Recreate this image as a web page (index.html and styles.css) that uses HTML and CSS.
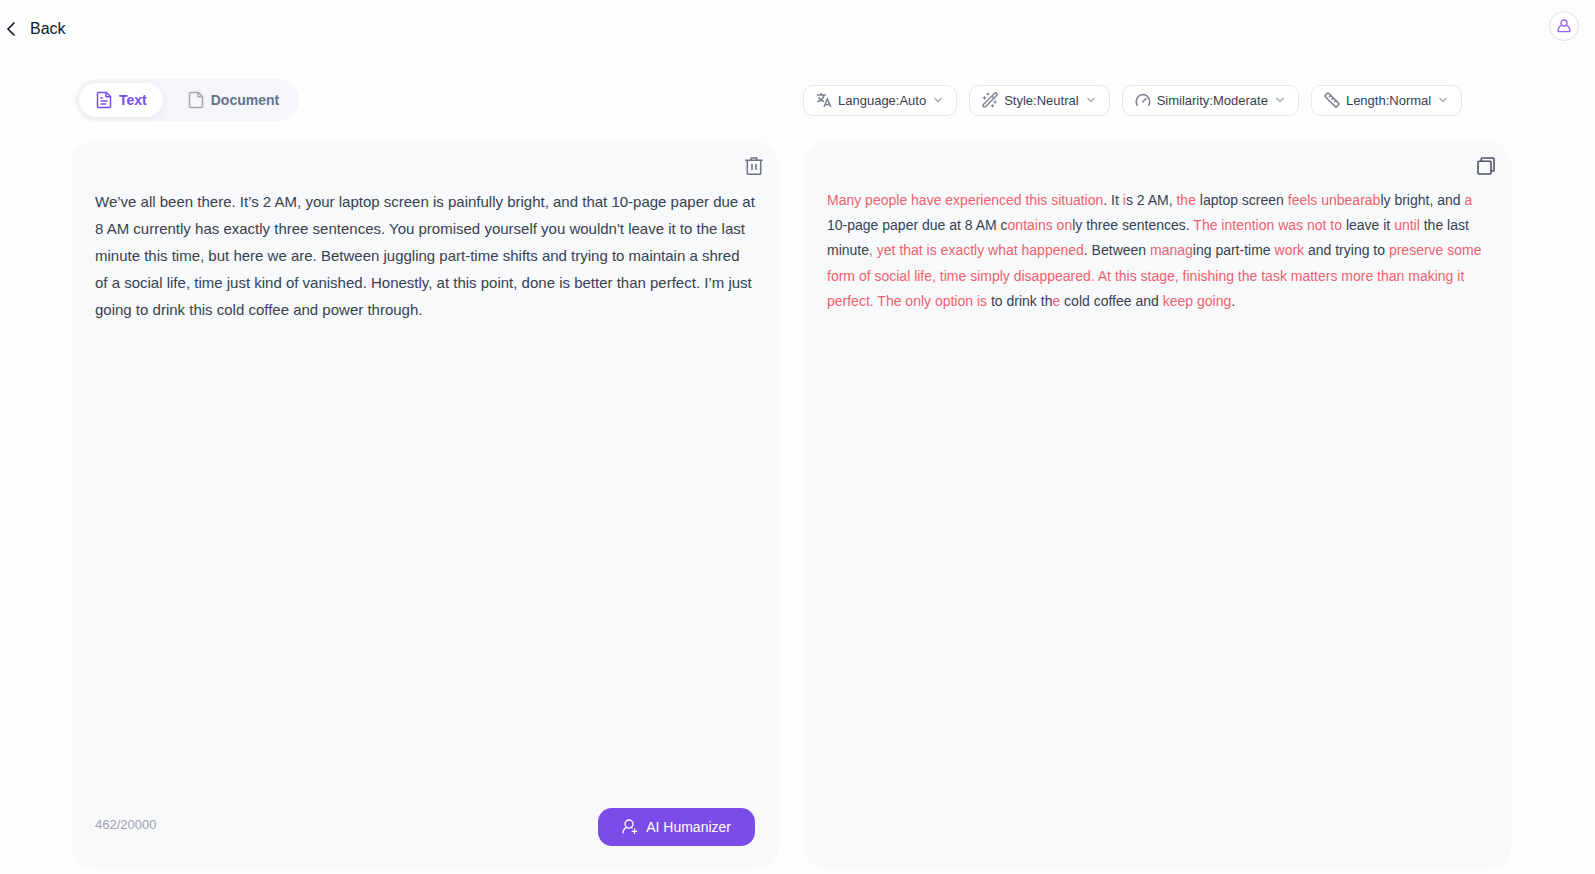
FILE: index.html
```html
<!DOCTYPE html>
<html lang="en">

<head>
    <meta charset="UTF-8">
    <meta name="viewport" content="width=device-width, initial-scale=1.0">
    <title>AI Humanizer</title>
    <link rel="stylesheet" href="styles.css">
</head>

<body>
    <header class="header">
        <a class="back" href="#">
            <svg width="22" height="22" viewBox="0 0 22 22" fill="none" stroke="currentColor" stroke-width="1.6">
                <path d="M14.5 4.500 8 11l6.500 6.500" />
            </svg>
            Back
        </a>
        <button class="avatar" type="button" aria-label="Account">
            <svg width="14" height="14" viewBox="0 0 14 14" fill="none" stroke="currentColor" stroke-width="1.3">
                <circle cx="7" cy="4" r="3" />
                <path d="M4.600 6.400C2.200 7.400 1 9.600 1 12.600h12c0-3-1.200-5.200-3.600-6.200" stroke-linejoin="round" />
            </svg>
        </button>
    </header>

    <main class="main">
        <div class="toolbar">
            <div class="tabs">
                <button class="tab active" type="button">
                    <svg width="18" height="18" viewBox="0 0 18 18" fill="none" stroke="currentColor" stroke-width="1.5" stroke-linejoin="round">
                        <path d="M3.500 1.500h8l4 4v10a1 1 0 0 1-1 1H3.500a1 1 0 0 1-1-1v-13a1 1 0 0 1 1-1z" />
                        <path d="M11 1.700v4h4M5.500 7h2.500M5.500 10h7M5.500 13h5.500" />
                    </svg>
                    Text
                </button>
                <button class="tab" type="button">
                    <svg width="18" height="18" viewBox="0 0 18 18" fill="none" stroke="#a3a8b3" stroke-width="1.5" stroke-linejoin="round">
                        <path d="M3.500 1.500h8l4 4v10a1 1 0 0 1-1 1H3.500a1 1 0 0 1-1-1v-13a1 1 0 0 1 1-1z" />
                        <path d="M11 1.700v4h4" />
                    </svg>
                    Document
                </button>
            </div>
            <div class="filters">
                <div class="filter">
                    <svg width="16" height="16" viewBox="0 0 16 16" fill="none" stroke="currentColor" stroke-width="1.5">
                        <path d="M.800 3h9M5.200 1v2M2.600 5c.8 2 3 4 5.400 4.600M8 3.200C7.200 6.500 4.500 8.800 1.300 9.800M8 15l3.400-8 3.400 8M9.200 12.500h4.400" />
                    </svg>
                    <label for="language">Language:</label>
                    <select id="language">
                        <option>Auto</option>
                        <option>English</option>
                        <option>Spanish</option>
                    </select>
                    <svg class="arrow" width="12" height="12" viewBox="0 0 12 12" fill="none" stroke="currentColor" stroke-width="1.3">
                        <path d="m2.500 4 3.500 3.500 3.500-3.500" />
                    </svg>
                </div>
                <div class="filter">
                    <svg width="16" height="16" viewBox="0 0 16 16" fill="none" stroke="currentColor" stroke-width="1.4" stroke-linecap="round" stroke-linejoin="round">
                        <path d="M1.400 12.400 12.400 1.400a1.500 1.500 0 0 1 2.200 2.200L3.600 14.600a1.500 1.500 0 0 1-2.200-2.200zM9.800 4 12 6.200" />
                        <path d="M6 1v2M5 2h2M2.500 4.500v2.600M1.200 5.800h2.600M13 8.800v2.400M11.800 10h2.400M10.500 12.800v2M9.500 13.800h2" stroke-width="1.2" />
                    </svg>
                    <label for="style">Style:</label>
                    <select id="style">
                        <option>Neutral</option>
                        <option>Formal</option>
                        <option>Casual</option>
                    </select>
                    <svg class="arrow" width="12" height="12" viewBox="0 0 12 12" fill="none" stroke="currentColor" stroke-width="1.3">
                        <path d="m2.500 4 3.500 3.500 3.500-3.500" />
                    </svg>
                </div>
                <div class="filter">
                    <svg width="16" height="16" viewBox="0 0 16 16" fill="none" stroke="currentColor" stroke-width="1.5" stroke-linecap="round">
                        <path d="M2.400 13.300A7 7 0 0 1 8 2.600a7 7 0 0 1 5.600 10.700M7.800 9.800l3.200-3.200" />
                    </svg>
                    <label for="similarity">Similarity:</label>
                    <select id="similarity">
                        <option>Moderate</option>
                        <option>Low</option>
                        <option>High</option>
                    </select>
                    <svg class="arrow" width="12" height="12" viewBox="0 0 12 12" fill="none" stroke="currentColor" stroke-width="1.3">
                        <path d="m2.500 4 3.500 3.500 3.500-3.500" />
                    </svg>
                </div>
                <div class="filter">
                    <svg width="16" height="16" viewBox="0 0 16 16" fill="none" stroke="currentColor" stroke-width="1.5" stroke-linejoin="round" stroke-linecap="round">
                        <path d="M1.300 4.700a1 1 0 0 1 0-1.400l2-2a1 1 0 0 1 1.400 0l10 10a1 1 0 0 1 0 1.400l-2 2a1 1 0 0 1-1.400 0z" />
                        <path d="M6.800 3.400 5.400 4.800M9.300 5.900 7.900 7.300M11.800 8.400l-1.400 1.400" />
                    </svg>
                    <label for="length">Length:</label>
                    <select id="length">
                        <option>Normal</option>
                        <option>Shorter</option>
                        <option>Longer</option>
                    </select>
                    <svg class="arrow" width="12" height="12" viewBox="0 0 12 12" fill="none" stroke="currentColor" stroke-width="1.3">
                        <path d="m2.500 4 3.500 3.500 3.500-3.500" />
                    </svg>
                </div>
            </div>
        </div>

        <div class="panels">
            <section class="panel">
                <div class="panel-top">
                    <button class="icon-btn trash" type="button" aria-label="Clear">
                        <svg width="18" height="18" viewBox="0 0 18 18" fill="none" stroke="currentColor" stroke-width="1.5">
                            <path d="M.300 3.300h17.400M6.200 3V.900h5.600V3M2.300 3.300v13.200a.8.8 0 0 0 .8.800h11.800a.8.800 0 0 0 .8-.8V3.300M7 7v6M11 7v6" />
                        </svg>
                    </button>
                </div>
                <textarea class="input" aria-label="Your text" spellcheck="false">We’ve all been there. It’s 2 AM, your laptop screen is painfully bright, and that 10-page paper due at 8 AM currently has exactly three sentences. You promised yourself you wouldn't leave it to the last minute this time, but here we are. Between juggling part-time shifts and trying to maintain a shred of a social life, time just kind of vanished. Honestly, at this point, done is better than perfect. I’m just going to drink this cold coffee and power through.</textarea>
                <div class="panel-bottom">
                    <span class="count">462/20000</span>
                    <button class="submit" type="button">
                        <svg width="16" height="16" viewBox="0 0 16 16" fill="none" stroke="currentColor" stroke-width="1.300">
                            <circle cx="7" cy="5" r="4" />
                            <path d="M1 14.500c0-3.300 1.300-5.200 4-6.200M9 8.300c.6.200 1.100.5 1.600.9M12.500 9.500v5.500M9.700 12.300h5.600" />
                        </svg>
                        AI Humanizer
                    </button>
                </div>
            </section>

            <section class="panel">
                <div class="panel-top">
                    <button class="icon-btn" type="button" aria-label="Copy">
                        <svg width="18" height="18" viewBox="0 0 18 18" fill="none" stroke="currentColor" stroke-width="1.600" stroke-linejoin="round">
                            <rect x="1" y="4.300" width="13" height="12.700" rx="1" />
                            <path d="M4.300 4V1.800a.8.8 0 0 1 .8-.8h11.100a.8.800 0 0 1 .8.800v11.400a.8.800 0 0 1-.8.800H14" />
                        </svg>
                    </button>
                </div>
                <p class="output"><mark>Many people have experienced this situation</mark>. It <mark>i</mark>s 2 AM, <mark>the</mark> laptop screen <mark>feels unbearab</mark>ly bright, and <mark>a</mark> 10-page paper due at 8 AM c<mark>ontains on</mark>ly three sentences. <mark>The intention was not to</mark> leave it <mark>until</mark> the last minute<mark>, yet that is exactly what happened</mark>. Between <mark>manag</mark>ing part-time <mark>work</mark> and trying to <mark>preserve some form of social life, time simply disappeared. At this stage, finishing the task matters more than making it perfect. The only option is</mark> to drink th<mark>e</mark> cold coffee and <mark>keep going</mark>.</p>
            </section>
        </div>
    </main>
</body>

</html>
```

FILE: styles.css
```css
*{
    margin: 0;
    padding: 0;
    box-sizing: border-box;
}
body{
    min-height: 100vh;
    display: flex;
    flex-direction: column;
    background-color: #fdfdfd;
    color: #374151;
    font-family: "Liberation Sans", Arial, sans-serif;
    font-size: 14px;
}
button, select, textarea{
    font: inherit;
    color: inherit;
    border: none;
    background: none;
}
button{
    cursor: pointer;
}
svg{
    flex-shrink: 0;
}
.header{
    display: flex;
    justify-content: space-between;
    align-items: flex-start;
    height: 79px;
    padding: 11px 16px 0 0;
}
.back{
    display: flex;
    align-items: center;
    gap: 8px;
    height: 35px;
    color: #111827;
    font-size: 16px;
    text-decoration: none;
}
.avatar{
    display: flex;
    align-items: center;
    justify-content: center;
    width: 30px;
    height: 30px;
    border: 1px solid #e0e1e5;
    border-radius: 50%;
    background-color: #fff;
    color: #9061f0;
}
.main{
    flex: 1;
    display: flex;
    flex-direction: column;
    gap: 20px;
    padding: 0 84px 4px 71px;
}
.toolbar, .panels{
    display: grid;
    grid-template-columns: 1fr 1fr;
    gap: 24px;
}
.toolbar{
    align-items: center;
}
.tabs{
    display: flex;
    justify-self: start;
    gap: 8px;
    margin-left: 4px;
    padding: 4px;
    border-radius: 21px;
    background-color: #f5f6fa;
}
.tab{
    display: flex;
    align-items: center;
    gap: 6px;
    height: 34px;
    padding: 0 16px;
    border-radius: 17px;
    color: #64748b;
    font-weight: bold;
}
.tab.active{
    background-color: #fff;
    color: #7c4ce8;
    box-shadow: 0 2px 8px rgba(0, 0, 0, 0.06);
}
.filters{
    display: flex;
    gap: 12px;
}
.filter{
    display: flex;
    align-items: center;
    height: 31px;
    padding: 0 12px;
    border: 1px solid #e5e7eb;
    border-radius: 10px;
    background-color: #fff;
    color: #7b8290;
    font-size: 13px;
}
.filter label{
    margin-left: 6px;
    color: #374151;
}
.filter select{
    appearance: none;
    field-sizing: content;
    color: #374151;
}
.arrow{
    margin-left: 6px;
    color: #a3a8b3;
    pointer-events: none;
}
.panels{
    flex: 1;
}
.panel{
    display: flex;
    flex-direction: column;
    padding-bottom: 24px;
    border-radius: 24px;
    background-color: #f8f9fb;
}
.panel-top{
    display: flex;
    justify-content: flex-end;
    height: 47px;
    padding: 16px 16px 0;
}
.icon-btn{
    display: flex;
    height: 18px;
    color: #4b5563;
}
.trash{
    color: #6b7280;
}
.input{
    flex: 1;
    padding: 0 24px;
    outline: none;
    resize: none;
    font-size: 15px;
    line-height: 27px;
}
.output{
    padding: 0 24px;
    line-height: 1.8;
}
.output mark{
    background: none;
    color: #f0616d;
}
.panel-bottom{
    display: flex;
    justify-content: space-between;
    align-items: flex-start;
    padding: 0 24px;
}
.count{
    color: #9ca3af;
    font-size: 13px;
    line-height: 34px;
}
.submit{
    display: flex;
    align-items: center;
    gap: 8px;
    height: 38px;
    padding: 0 24px;
    border-radius: 14px;
    background-color: #7c4ce8;
    color: #fff;
}
```
